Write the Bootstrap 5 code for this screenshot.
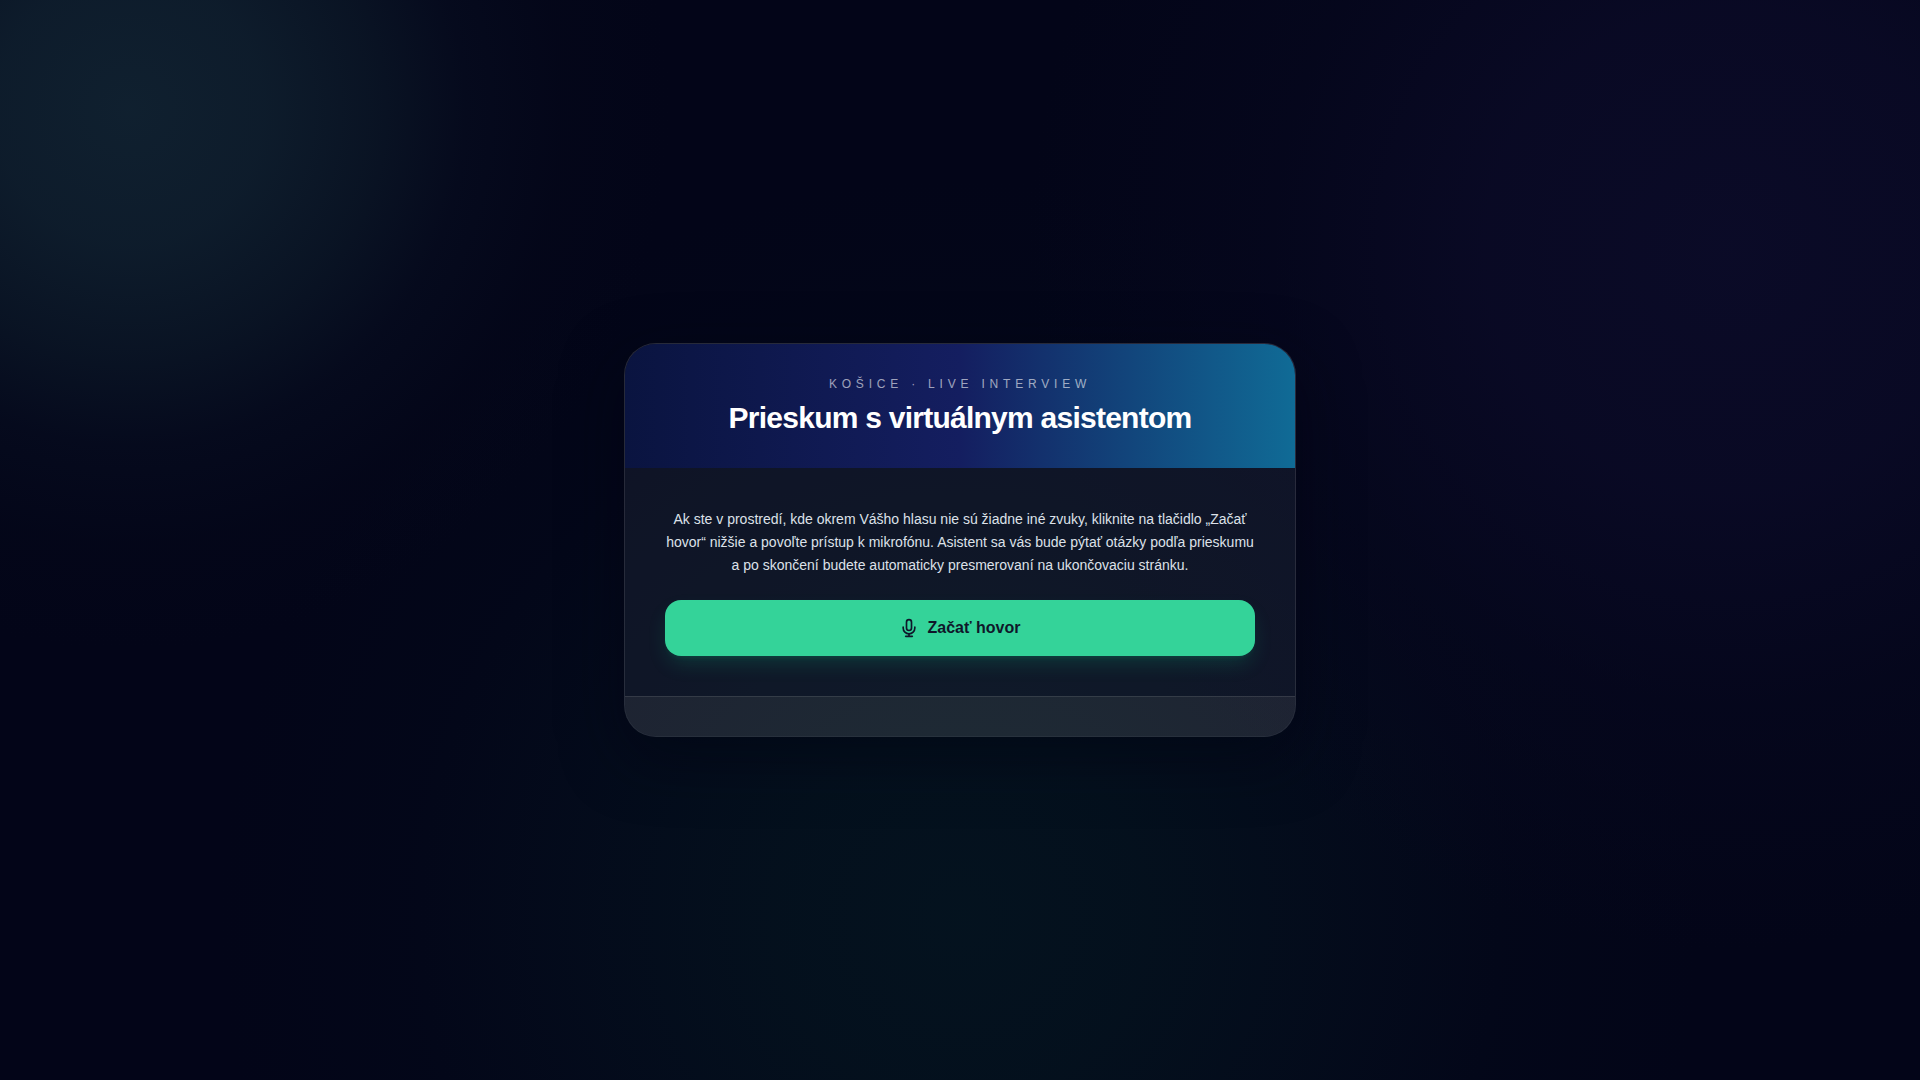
<!DOCTYPE html>
<html lang="sk">
<head>
<meta charset="utf-8">
<meta name="viewport" content="width=device-width, initial-scale=1">
<title>Prieskum s virtuálnym asistentom</title>
<link href="https://cdn.jsdelivr.net/npm/bootstrap@5.3.0/dist/css/bootstrap.min.css" rel="stylesheet">
<style>
body {
  font-family: "Liberation Sans", Arial, sans-serif;
  color: #f1f5f9;
  background:
    radial-gradient(circle 540px at 130px 110px, rgba(16,33,48,.97) 0%, rgba(15,31,46,.88) 25%, rgba(13,27,42,.66) 45%, rgba(9,17,36,.42) 62%, rgba(6,10,28,.25) 80%, transparent 100%),
    radial-gradient(circle 700px at 90% 250px, rgba(11,11,40,.95) 0%, rgba(10,10,38,.85) 35%, rgba(7,8,32,.5) 65%, transparent 100%),
    radial-gradient(circle 740px at 50% 85%, rgba(4,19,31,.95) 0%, rgba(4,18,30,.85) 25%, rgba(4,14,29,.6) 55%, rgba(3,9,26,.4) 75%, transparent 100%),
    #030518;
}
.call-card {
  max-width: 672px;
  border: 1px solid rgba(255,255,255,.1);
  border-radius: 32px;
  background: rgba(255,255,255,.05);
  box-shadow: 0 20px 60px rgba(2,4,18,.5);
}
.call-head {
  padding: 32px 40px;
  background: linear-gradient(90deg, #0a1440 0%, #141e60 50%, #106b96 100%);
}
.eyebrow { font-size: 12px; line-height: 16px; letter-spacing: .4em; color: rgba(255,255,255,.6); }
.call-title { font-size: 30px; line-height: 36px; font-weight: 600; letter-spacing: -.025em; color: #fff; }
.call-body { padding: 40px; background: rgba(15,23,42,.4); }
.call-intro { margin-bottom: 23px; font-size: 14px; line-height: 23px; color: #dde1e9; }
.btn-call {
  --bs-btn-color: #0f172a; --bs-btn-bg: #34d399;
  --bs-btn-hover-color: #0f172a; --bs-btn-hover-bg: #6ee7b7;
  --bs-btn-active-color: #0f172a; --bs-btn-active-bg: #10b981;
  padding: 16px 24px;
  border: 0;
  border-radius: 16px;
  font-size: 16px; line-height: 24px; font-weight: 600;
  box-shadow: 0 10px 20px -3px rgba(16,185,129,.2), 0 4px 6px -4px rgba(16,185,129,.2);
}
.call-foot { min-height: 40px; border-top: 1px solid rgba(255,255,255,.1); background: rgba(255,255,255,.06); }
</style>
<script src="https://cdn.jsdelivr.net/npm/bootstrap@5.3.0/dist/js/bootstrap.bundle.min.js" defer></script>
</head>
<body>
<div class="min-vh-100 d-flex align-items-center justify-content-center">
  <main class="call-card w-100 overflow-hidden text-center">
    <header class="call-head">
      <p class="eyebrow text-uppercase mb-2">Košice · Live Interview</p>
      <h1 class="call-title mb-0">Prieskum s virtuálnym asistentom</h1>
    </header>
    <section class="call-body">
      <p class="call-intro">Ak ste v prostredí, kde okrem Vášho hlasu nie sú žiadne iné zvuky, kliknite na tlačidlo „Začať hovor“ nižšie a povoľte prístup k mikrofónu. Asistent sa vás bude pýtať otázky podľa prieskumu a po skončení budete automaticky presmerovaní na ukončovaciu stránku.</p>
      <button type="button" class="btn btn-call w-100 d-flex align-items-center justify-content-center gap-2">
        <svg width="20" height="20" viewBox="0 0 24 24" fill="none" stroke="currentColor" stroke-width="2" stroke-linecap="round" stroke-linejoin="round" aria-hidden="true">
          <path d="M12 2a3 3 0 0 0-3 3v7a3 3 0 0 0 6 0V5a3 3 0 0 0-3-3Z"/>
          <path d="M19 11v1a7 7 0 0 1-14 0v-1"/>
          <path d="M12 19v3M8 22h8"/>
        </svg>
        <span>Začať hovor</span>
      </button>
    </section>
    <footer class="call-foot"></footer>
  </main>
</div>
</body>
</html>
